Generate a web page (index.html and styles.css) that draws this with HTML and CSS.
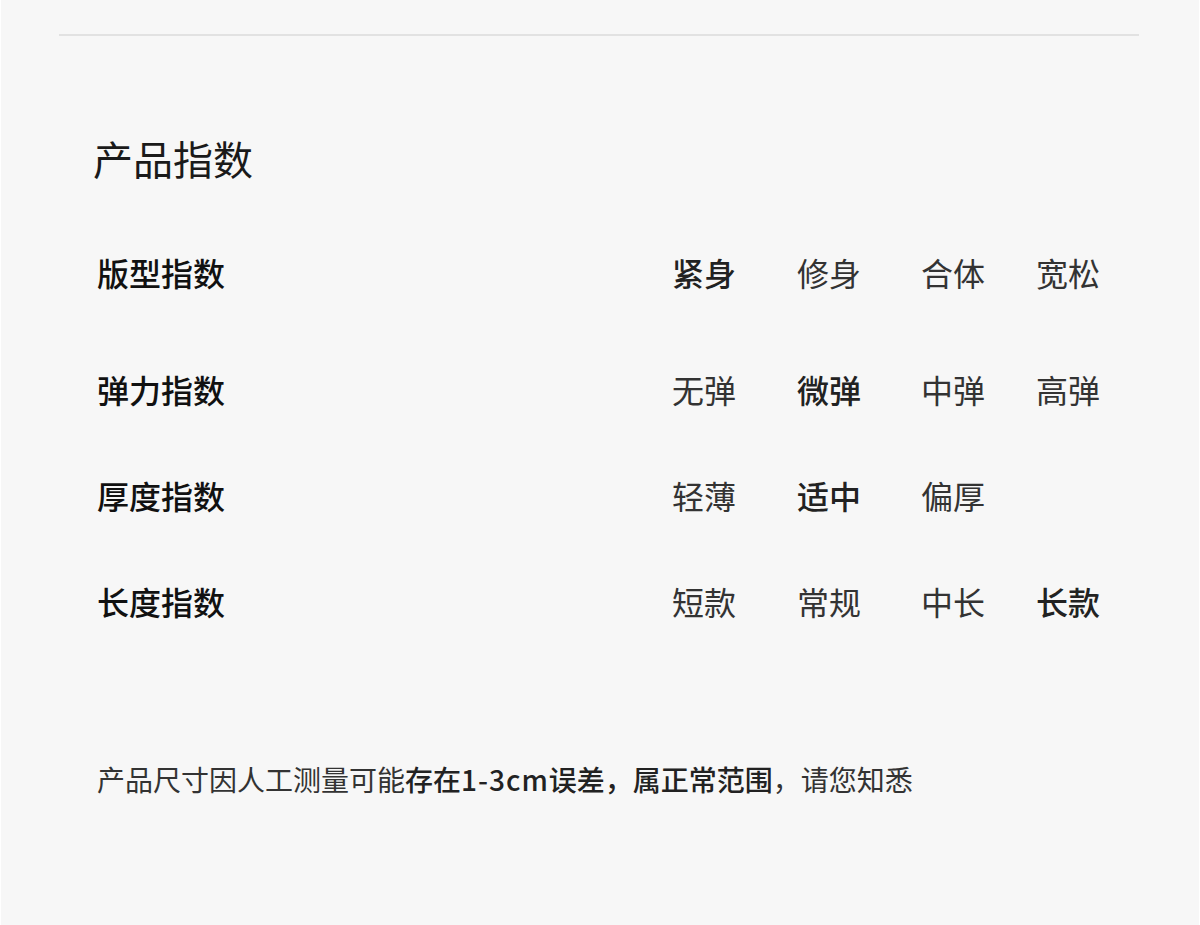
FILE: index.html
```html
<!DOCTYPE html>
<html lang="zh-CN">
<head>
    <meta charset="UTF-8">
    <meta name="viewport" content="width=device-width, initial-scale=1.0">
    <title>产品指数</title>
    <link rel="stylesheet" href="styles.css">
</head>
<body>
    <div class="page">
        <!-- Top divider -->
        <div class="divider"></div>

        <!-- Product index -->
        <div class="index-section">
            <h2 class="index-title">产品指数</h2>

            <div class="index-list">
                <div class="index-row first">
                    <div class="index-label">版型指数</div>
                    <div class="index-options">
                        <span class="option active">紧身</span>
                        <span class="option">修身</span>
                        <span class="option">合体</span>
                        <span class="option">宽松</span>
                    </div>
                </div>
                <div class="index-row">
                    <div class="index-label">弹力指数</div>
                    <div class="index-options">
                        <span class="option">无弹</span>
                        <span class="option active">微弹</span>
                        <span class="option">中弹</span>
                        <span class="option">高弹</span>
                    </div>
                </div>
                <div class="index-row">
                    <div class="index-label">厚度指数</div>
                    <div class="index-options">
                        <span class="option">轻薄</span>
                        <span class="option active">适中</span>
                        <span class="option">偏厚</span>
                        <span class="option"></span>
                    </div>
                </div>
                <div class="index-row">
                    <div class="index-label">长度指数</div>
                    <div class="index-options">
                        <span class="option">短款</span>
                        <span class="option">常规</span>
                        <span class="option">中长</span>
                        <span class="option active">长款</span>
                    </div>
                </div>
            </div>

            <!-- Note -->
            <p class="index-note">产品尺寸因人工测量可能<strong>存在<span class="latin">1-3cm</span>误差，属正常范围</strong>，请您知悉</p>
        </div>
    </div>
</body>
</html>
```

FILE: styles.css
```css
/* Basic reset */
* {
    margin: 0;
    padding: 0;
    box-sizing: border-box;
}

body {
    font-family: "Noto Sans CJK SC", "Noto Sans", sans-serif;
    background-color: #fff;
    color: #222;
}

.page {
    width: 1200px;
    height: 925px;
    margin: 0 auto;
    background-color: #f7f7f7;
    border-left: 1px solid #fff;
    border-right: 1px solid #fff;
    padding-top: 34px;
}

/* Divider */
.divider {
    height: 2px;
    margin: 0 60px 0 58px;
    background-color: #e2e2e2;
}

/* Index section */
.index-section {
    padding: 102px 99px 0 92px;
}

.index-title {
    font-size: 40px;
    font-weight: 400;
    line-height: 40px;
    color: #1a1a1a;
}

.index-list {
    margin-top: 41px;
    padding-left: 4px;
}

.index-row {
    height: 106px;
    display: flex;
    align-items: center;
}

.index-row.first {
    margin-bottom: 11px;
}

.index-label {
    font-size: 32px;
    font-weight: 500;
    line-height: 32px;
    color: #111;
}

.index-options {
    margin-left: auto;
    display: grid;
    grid-template-columns: 125px 124px 115px 64px;
}

.option {
    font-size: 32px;
    line-height: 32px;
    color: #333;
    white-space: nowrap;
}

.option.active {
    font-weight: 500;
    color: #222;
}

/* Note */
.index-note {
    margin-top: 111px;
    padding-left: 4px;
    font-size: 28px;
    line-height: 28px;
    color: #333;
}

.index-note strong {
    font-weight: 500;
    color: #222;
}

.index-note .latin {
    letter-spacing: 1px;
}
```
